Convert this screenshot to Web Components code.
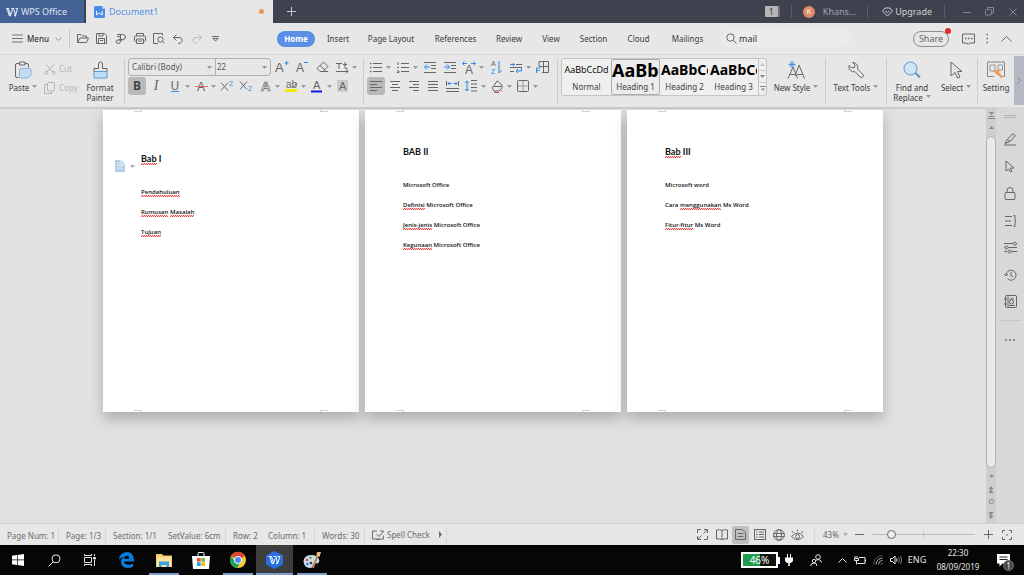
<!DOCTYPE html>
<html lang="en">
<head>
<meta charset="utf-8">
<title>Document1 - WPS Office</title>
<style>
html, body { margin: 0; padding: 0; }
body { font: 8px/12px "Noto Sans", "Open Sans", sans-serif; color: #3a3a3a; background: #e1e1e1; }
</style>
</head>
<body>
<wps-app></wps-app>
<script>
const BLUE = '#2f86e8';
const T = 'font-family="Liberation Sans, sans-serif" stroke="none" fill="currentColor"';
/* name: [width, height, markup] */
const ICONS = {
  arr: [5, 3, '<path d="M0 0h5L2.500 3z" fill="currentColor" stroke="none"/>'],
  arrup: [5, 3, '<path d="M0 3h5L2.500 0z" fill="currentColor" stroke="none"/>'],
  wlogo: [12, 10, '<path stroke-width="1.100" d="M0 1.500h2.500l2 7L6.500 2.500M1 1.500l2.300 7h1.200M5 1.500h2.500l2 7 2-7H9.500M8 8.500h1.500"/>'],
  docw: [11, 12, '<path d="M1.500 0H8l3 3v7.500Q11 12 9.500 12h-8Q0 12 0 10.500v-9Q0 0 1.500 0z" fill="#4c8ae8" stroke="none"/><path d="M8 0v3h3" fill="#a9c8f7" stroke="none"/><path d="M2.500 5v4l2.800-2 2.900 2V5" stroke="#fff"/>'],
  plus: [9, 9, '<path d="M4.500 0v9M0 4.500h9" stroke-width="1"/>'],
  diamond: [11, 10, '<path d="M3 1h5l2.500 3-5 5-5-5zM3.500 4l2 1.500 2-1.500"/>'],
  min: [8, 8, '<path d="M0 4.500h8"/>'],
  restore: [9, 9, '<rect x=".5" y="2.500" width="6" height="5.500" rx="1"/><path d="M2.500 2.500V.5h6v5.500h-2"/>'],
  close: [8, 8, '<path d="M.5.500l7 7M7.500.500l-7 7"/>'],
  burger: [11, 9, '<path d="M0 1h11M0 4.500h11M0 8h11"/>'],
  chev: [7, 4, '<path d="M.5.500l3 3 3-3"/>'],
  open: [12, 11, '<path d="M.5 9.500V1.500H4L5.500 3H9.500V5M.5 9.500 3 5h8.500L9.500 9.500z"/>'],
  save: [11, 11, '<path d="M.5.500h8l2 2v8h-10zM2.500 10.500v-5h6v5M3 .5V3h4V.500M4 7.500h3"/>'],
  pdf: [12, 12, '<path d="M2 1.500h5.500q3 0 3 2.500t-3 2.500H5M2 3.500h3.500M5.500 1.500v6.500q0 2.500-2.200 2.500T1 8.800 3 7h5M5.500 5.500l-2 1.500"/>'],
  print: [12, 11, '<path d="M2.500 3V.500h7V3M2.500 8.500h-1q-1 0-1-1V4q0-1 1-1h9q1 0 1 1v3.500q0 1-1 1h-1M2.500 6h7v4.500h-7zM4 8h4"/>'],
  preview: [12, 11, '<path d="M5 10.500H.500V.500h9v2M11.500 10.500 9.500 8.500"/><circle cx="7.500" cy="6.500" r="2.700"/>'],
  undo: [10, 10, '<path d="M3.500.500l-3 3 3 3M.5 3.500H6q3.200 0 3.200 2.800T5 9.500"/>'],
  redo: [10, 10, '<path d="M6.500.500l3 3-3 3M9.500 3.500H4Q.8 3.500.8 6.300T5 9.500"/>'],
  more: [7, 6, '<path d="M0 .5h7"/><path d="M1 2.500h5L3.500 5z"/>'],
  search: [11, 11, '<circle cx="4.500" cy="4.500" r="3.700"/><path d="M7.500 7.500l3 3"/>'],
  chat: [13, 12, '<path d="M.5 1h12v9h-5l-1.500 1.500L5 10H.500z"/><path d="M3 5.500h1.500M6 5.500h1.500M9 5.500h1.500" stroke-width="1.500"/>'],
  vdots: [3, 11, '<path d="M.5 1.500h1.500M.5 5.500h1.500M.5 9.500h1.500" stroke-width="1.500"/>'],
  caretup: [11, 6, '<path d="M.5 5.500l5-5 5 5"/>'],
  paste: [18, 18, '<path d="M4.500 16.500H3q-1.500 0-1.500-1.500V4Q1.500 2.500 3 2.500h2M11 2.500h2q1.500 0 1.500 1.500v2.500M5.500 1h5.500v3H5.500z"/><path d="M7 7.500h8.500q1.500 0 1.500 1.500v5L14 17H7q-1.500 0-1.500-1.500V9Q5.500 7.500 7 7.500z" fill="#c3dbf3" stroke="#8fb2dc"/>'],
  cut: [12, 11, '<path d="M2 .5l7 7.500M10 .5 3 8"/><circle cx="2.300" cy="8.800" r="1.500"/><circle cx="9.700" cy="8.800" r="1.500"/>'],
  copy: [11, 12, '<rect x="3.500" y=".5" width="7" height="8.500" rx="1"/><path d="M3.500 2.500H.500v9h7V9"/>'],
  painter: [18, 18, '<path d="M3 10.500h13v6.500H3z" fill="#c3ddf6" stroke="#5f9bdb"/><path d="M3 10.500V7.500h4.500V3q0-2 2-2t2 2v4.500H16v3"/>'],
  aplus: [14, 14, `<text x="0" y="12" font-size="13" ${T}>A</text><path d="M11.500 1v4M9.500 3h4" stroke="${BLUE}"/>`],
  aminus: [14, 14, `<text x="1" y="12" font-size="12" ${T}>A</text><path d="M9 2.500h4" stroke="${BLUE}"/>`],
  eraser: [13, 12, '<path d="M1 7.500 7.500 1 12 5.500 7 10.500H4zM4 4.500l5 4.500M6 10.500h6"/>'],
  tt: [13, 12, '<path d="M0 2.500h6M3 2.500V8M7 3.500h4M9 1v5.500q0 1 1 1h1.500M0 10.500h12M10 8.500l2 2-2 2"/>'],
  strike: [13, 13, `<text x="2" y="11" font-size="12" ${T}>A</text><path d="M0 6.500h13" stroke="#e0706c"/>`],
  sup: [14, 12, `<path d="M1 2.500l7 8M8 2.500l-7 8"/><text x="9" y="6" font-size="7" ${T} style="fill:${BLUE}">2</text>`],
  sub: [14, 12, `<path d="M1 1.500l7 8M8 1.500l-7 8"/><text x="9" y="11" font-size="7" ${T} style="fill:${BLUE}">2</text>`],
  aout: [13, 13, '<text x="2" y="11" font-size="13" font-family="Liberation Sans, sans-serif" font-weight="700" stroke="currentColor" stroke-width=".7" fill="#e7e7e7">A</text>'],
  hilite: [13, 13, `<text x="1" y="8" font-size="10" ${T}>ab</text><path d="M0 10.500h12" stroke="#f4ec00" stroke-width="3"/><path d="M12 3 8 7.500"/>`],
  acolor: [12, 13, `<text x="2" y="9" font-size="11" ${T}>A</text><path d="M0 11.500h11" stroke="#1414ee" stroke-width="2"/>`],
  ashade: [12, 12, `<rect width="11" height="12" fill="#cacaca" stroke="none"/><text x="2" y="10" font-size="11" ${T}>A</text>`],
  bullets: [12, 11, '<path d="M3 1.500h9M3 5.500h9M3 9.500h9"/><path d="M0 1.500h1.500M0 5.500h1.500M0 9.500h1.500" stroke-width="1.500"/>'],
  numbers: [12, 11, '<path d="M4 1.500h8M4 5.500h8M4 9.500h8"/><path d="M1 0v3M0 5.500h2M0 9h2v1.500H0"/>'],
  outdent: [12, 11, `<path d="M0 .5h12M7 3.500h5M7 6.500h5M0 10.500h12"/><path d="M6 5H.500M3 2.500.500 5 3 7.500" stroke="${BLUE}"/>`],
  indent: [12, 11, `<path d="M0 .5h12M7 3.500h5M7 6.500h5M0 10.500h12"/><path d="M0 5h5.500M3 2.500 5.500 5 3 7.500" stroke="${BLUE}"/>`],
  adist: [14, 13, `<text x="3" y="13" font-size="12" ${T}>A</text><path d="M5 2.500H1M2.500.500l-2 2 2 2M9 2.500h4M11.500.500l2 2-2 2" stroke="${BLUE}"/>`],
  sort: [12, 14, `<text x="1" y="6" font-size="7" ${T}>A</text><text x="1" y="14" font-size="7" ${T} style="fill:${BLUE}">Z</text><path d="M9 1v12M9 13l2.500-2.500" stroke="${BLUE}"/>`],
  tabs: [12, 11, `<path d="M6 2.500h6M0 5.500h12M0 9.500h4"/><path d="M0 2.500h4M3 1l1.500 1.500L3 4M11.500 6v3H6M8 7 6 9l2 2" stroke="${BLUE}"/>`],
  tbl: [13, 12, `<path d="M3 5V.500h9.500v11H6M3 5.500h9.500M7.500.500v11"/><path d="M.5 12V7h4M.5 9.500h3" stroke="${BLUE}"/>`],
  left: [12, 11, '<path d="M0 .5h12M0 3.500h7M0 6.500h12M0 9.500h7"/>'],
  center: [12, 11, '<path d="M1 .5h10M3 3.500h6M1 6.500h10M3 9.500h6"/>'],
  right: [12, 11, '<path d="M1 .5h10M5 3.500h6M1 6.500h10M5 9.500h6"/>'],
  justify: [12, 11, '<path d="M1 .5h10M1 3.500h10M1 6.500h10M1 9.500h10"/>'],
  distrib: [13, 11, `<path d="M.5 0v5M12.500 0v5M0 7.500h13M0 10.500h13"/><path d="M2 2.500h3.500M3.500 1 2 2.500 3.500 4M11 2.500H7.500M9.500 1 11 2.500 9.500 4" stroke="${BLUE}"/>`],
  spacing: [12, 12, `<path d="M6 .5h6M6 4h6M6 7.500h6M6 11h6"/><path d="M2 1v10M0 3l2-2 2 2M0 9l2 2 2-2" stroke="${BLUE}"/>`],
  fill: [13, 13, '<path d="M2.500 6.500 6 1q1.500 0 2 1.500l3 2.500v3L8 11H3L1 7.500l1.500-1h8"/><path d="M3 12.500h5M9 9l2 2.500" stroke="#d9534f"/>'],
  borders: [12, 12, '<rect x=".5" y=".5" width="11" height="11" rx="1"/><path d="M6 1v10M1 6h10" stroke="#999"/>'],
  newstyle: [20, 18, `<path d="M2 17.500 7 6l4.500 11.500M4 13.500h6M9 15 13 4l5.500 13.500M11 13.500h6"/><path d="M6 0v7M2.500 3.500h7M3.500 1l5 5M8.500 1l-5 5" stroke="#4a90e2"/>`],
  wrench: [18, 18, '<path d="M5.500 1.500 8 4l-.5 2.500-2.500.500L2 4.500q-.8 3 1.300 5t4.500 1L13 16q1.500 1.300 2.800 0t0-2.800L10.500 8Q11.500 5 9.500 3t-4-1.500z"/>'],
  find: [18, 18, '<circle cx="7.500" cy="7.500" r="6.500" fill="#cfe4f6" stroke="#5b97d8"/><path d="M12.500 12 17 16.500" stroke="#5b97d8" stroke-width="2"/>'],
  cursor: [14, 18, '<path d="M2 1v14l4-3.500 2.500 5.500 2.500-1-2.500-5.500H13z"/>'],
  setting: [20, 18, '<path d="M8 15.500H1.500V1h17v14.500H17" stroke="#888"/><path d="M4 4h5v6H4zM12 4h4.500v5H12z" stroke="#999"/><path d="M8.500 9l2.500 3 2-3.500M11.500 11.500l4.500 5" stroke="#ef9a55" stroke-width="2.500"/>'],
  expand: [4, 7, '<path d="M.5.500l3 3-3 3"/>'],
  smallmore: [6, 6, '<path d="M0 .5h6"/><path d="M1 2.500h4L3 5z" fill="currentColor" stroke="none"/>'],
  pageopt: [10, 12, '<path d="M0 0h6l4 4v8H0z" fill="#b5cde6" stroke="none"/><path d="M2 3h3M2 5.500h6M2 8h6M6 0v4h4" stroke="#eef4fa"/>'],
  browse: [7, 7, '<path d="M1 0h5L3.500 3z" fill="currentColor" stroke="none"/><path d="M1 4.500h5M0 6.500h7"/>'],
  pen: [14, 13, '<path d="M2 10.500 4.500 6 10 .700l2.300 2L7 8.500zM4.500 6.500 7 8.500M1 12h12"/>'],
  pointer: [10, 13, '<path d="M1 1v10l2.500-2 2 3 1.500-.700-1.500-3.300H9z"/>'],
  lock: [12, 13, '<path d="M3 5.500V4q0-3.500 3-3.500T9 4v1.500"/><rect x="1" y="5.500" width="10" height="7" rx="1"/>'],
  lines: [13, 12, '<path d="M1 1.500h7M1 6h6M1 10.500h7M9.500.500h1.500v4.500l1 1-1 1v4.500H9.500"/>'],
  sliders: [13, 12, '<path d="M0 1.500h9M4 5.500h9M0 9.500h3M7 9.500h6M0 5.500h1"/><circle cx="11" cy="1.700" r="1.500"/><circle cx="2.500" cy="5.500" r="1.500"/><circle cx="5.500" cy="9.500" r="1.500"/>'],
  history: [13, 12, '<path d="M2 6a5 5 0 1 1 1.500 3.800M0 5l2 2 2-2M7 3v3.500l2 1.500"/>'],
  contact: [13, 13, '<rect x="1.500" y=".5" width="11" height="12" rx="1"/><path d="M4 1v11M0 4h3M0 9h3M5 10.500h6M5.500 4.500q2.500-2.500 4.500 0"/><circle cx="7.500" cy="7" r="2"/>'],
  dots: [11, 2, '<path d="M0 1h2M4 1h2M8 1h2" stroke-width="2"/>'],
  dblup: [6, 7, '<path d="M.5 3.500h5L3 0zM.5 7h5L3 3.500z" fill="currentColor" stroke="none"/>'],
  dbldn: [6, 7, '<path d="M.5 0h5L3 3.500zM.5 3.500h5L3 7z" fill="currentColor" stroke="none"/>'],
  box: [5, 5, '<rect x=".5" y=".5" width="4" height="4" rx="1"/>'],
  spell: [12, 10, '<path d="M5 1H.500v8h11V5.500M8 1h3.500v1M4 9.500h4"/><path d="M4.500 4l2.500 2.500 4-4.500" />'],
  play: [3, 7, '<path d="M0 0l3 3.500L0 7z" fill="#5c6b85" stroke="none"/>'],
  full: [11, 11, '<path d="M.5 4V.500H4M7 .5h3.500V4M10.500 7v3.500H7M4 10.500H.500V7M6.500 4.500l3.500-3.500M4.500 6.500 1 10"/>'],
  book: [12, 11, '<path d="M6 1.500v9M6 1.500Q3.500 0 .5 1v9q3-.5 5.500.500Q8.500 9.500 11.500 10V1Q8.500 0 6 1.500z"/>'],
  doc: [11, 11, '<path d="M.5.500h7l3 3v7h-10zM2.500 4.500h6M2.500 7.500h6"/>'],
  outline: [12, 11, '<rect x=".5" y=".5" width="11" height="10"/><path d="M2 3h1.500M5 3h5M2 5.500h1.500M5 5.500h5M2 8h1.500M5 8h5"/>'],
  globe: [12, 12, '<circle cx="6" cy="6" r="5.400"/><ellipse cx="6" cy="6" rx="2.500" ry="5.400"/><path d="M.5 4.500h11M.5 7.500h11"/>'],
  eye: [13, 12, '<path d="M.5 7.500Q6.500.500 12.500 7.500 6.500 14 .5 7.500zM6.500 2.500V.500M2.500 4 1 2M10.500 4 12 2"/><circle cx="6.500" cy="7.500" r="2"/>'],
  minus: [9, 9, '<path d="M0 4.500h9"/>'],
  fit: [10, 10, '<path d="M.5 3V.500H3M7 .5h2.500V3M9.500 7v2.500H7M3 9.500H.500V7M4 5h2"/>'],
  win: [12, 12, '<path d="M0 1.700 5 1v4.600H0zM5.700.900 12 0v5.600H5.700zM0 6.300h5V11l-5-.700zM5.700 6.300H12V12l-6.300-.900z" fill="#fff" stroke="none"/>'],
  wsearch: [13, 13, '<circle cx="8" cy="4.800" r="4"/><path d="M5 8 .5 12.500"/>'],
  taskview: [13, 12, '<path d="M.5 0v1.500h7V0M.5 12v-1.500h7V12M.5 3.500h7v5h-7zM10.500 0v2M10.500 6v6"/><path d="M9.500 3.500h2v1.500h-2z" fill="currentColor"/>'],
  edge: [15, 16, '<path d="M0 8Q.5.500 8 0q6.500.300 7 7.500v2H5q.5 3.300 4.500 3.300 2.500 0 4.500-1.300v3.200Q11.500 16 8.500 16 2 15.500 2 10q0-3.500 3-5.300Q1.500 5 0 8zM5 6.700h5.300Q10.200 3.700 7.800 3.700 5.500 3.700 5 6.700z" fill="#0a7bd8" stroke="none"/>'],
  files: [16, 15, '<path d="M0 1h6l1 1.500h9V14H0z" fill="#f5cf6b" stroke="none"/><path d="M1 4h14v10H1z" fill="#fbe29a" stroke="none"/><path d="M3 14V8.500h10V14h-2.500v-2h-5v2z" fill="#3aa0e6" stroke="none"/>'],
  store: [18, 17, '<path d="M6 4V1.500Q6 .5 7 .5h4q1 0 1 1V4" stroke="#fff"/><path d="M0 4h18l-1 13H1z" fill="#fff" stroke="none"/><path d="M5 6h3.700v3.700H5z" fill="#e8502b" stroke="none"/><path d="M9.300 6H13v3.700H9.300z" fill="#7cb82f" stroke="none"/><path d="M5 10.300h3.700V14H5z" fill="#1b9fe4" stroke="none"/><path d="M9.300 10.300H13V14H9.300z" fill="#fbb811" stroke="none"/>'],
  chrome: [16, 16, '<circle cx="8" cy="8" r="8" fill="#f5c92f" stroke="none"/><path d="M8 8 1 4a8 8 0 0 1 14 0z" fill="#dc4437" stroke="none"/><path d="M8 8H3.800L1 4a8 8 0 0 0 6 12l3-5z" fill="#1c9f5a" stroke="none"/><circle cx="8" cy="8" r="3.600" fill="#4a8af4" stroke="#fff" stroke-width="1"/>'],
  wpsapp: [17, 18, '<path d="M8.500 0 17 4.500v9L8.500 18 0 13.500v-9z" fill="#2a6fe0" stroke="none"/><path stroke="#fff" d="M2.500 5.500h3l2 7 1.500-5M4 5.500l2 7h1.500M7.500 5.500h2.500l1.500 7 2.500-7H11.500M10 12.500h1.500"/>'],
  paint: [18, 17, '<path d="M7.500 3Q1 3.500.5 9.500 1 15.500 7 16q3 0 2.800-2.500 0-2 2.500-2 4 .5 4-3Q15.500 3 7.500 3z" fill="#c9dcec" stroke="none"/><circle cx="4" cy="8" r="1.300" fill="#d94e3d" stroke="none"/><circle cx="7.500" cy="5.800" r="1.300" fill="#58a946" stroke="none"/><circle cx="4.500" cy="12" r="1.300" fill="#2f7bd0" stroke="none"/><circle cx="8" cy="11" r="1.300" fill="#333" stroke="none"/><path d="M15.500 1 10 16" stroke="#c07a40" stroke-width="2"/><path d="M14 0h4l-1.500 5-3-1z" fill="#e9c08a" stroke="none"/>'],
  plug: [8, 12, '<path d="M2.500 0v4M5.500 0v4" stroke="#fff"/><path d="M0 3.500h8V6Q8 8.500 4.800 9v3H3.200V9Q0 8.500 0 6z" fill="#fff" stroke="none"/>'],
  people: [12, 12, '<circle cx="8" cy="3" r="2.300"/><path d="M5.500 6.500 8 5.500q3 0 3.500 3"/><circle cx="4" cy="7" r="1.700"/><path d="M.5 12q.5-3 3.500-3t3 3"/>'],
  traycaret: [9, 5, '<path d="M.5 4.500l4-4 4 4"/>'],
  batt: [12, 10, '<path d="M5 2.500h6v6H3.500M1 1v2M3 1v2M.5 3.500h4v2h-4zM2.500 6v3.500M11.500 4.500v2"/>'],
  wifi: [10, 10, '<path d="M.5 9.500a9 9 0 0 1 9-9" stroke="#555"/><path d="M3 9.500A6.500 6.500 0 0 1 9.500 3M5.500 9.500a4 4 0 0 1 4-4M8 9.500 9.500 8" stroke="#aaa"/>'],
  sound: [12, 10, '<path d="M.5 3.500h2L5 1v8L2.500 6.500h-2zM6.500 3.500q1 1.500 0 3"/><path d="M8.500 2q2 3 0 6M10.500 1q2.500 4 0 8" stroke="#777"/>'],
  note: [13, 13, '<path d="M0 0h13v9.500H5.500L2.500 12.500V9.500H0z" fill="#fff" stroke="none"/><path d="M2.500 3h8M2.500 5.500h8" stroke="#222"/>']
};

class View extends HTMLElement {
  connectedCallback() {
    if (this.shadowRoot) return;
    this.attachShadow({ mode: 'open' }).innerHTML = `<style>
      * { box-sizing: border-box; }
      button { font: inherit; color: inherit; background: none; border: 0; padding: 0; margin: 0; display: flex; align-items: center; white-space: nowrap; }
      ${this.css()}</style>${this.html()}`;
  }
  css() { return ''; }
  html() { return '<slot></slot>'; }
}
const icon = (n, cls = '') => `<ui-icon name="${n}" class="${cls}"></ui-icon>`;

customElements.define('ui-icon', class extends View {
  css() { return ':host { display: inline-flex; flex: none; } svg { display: block; overflow: visible; }'; }
  html() {
    const [w, h, body] = ICONS[this.getAttribute('name')];
    return `<svg width="${w}" height="${h}" viewBox="0 0 ${w} ${h}" fill="none" stroke="currentColor" aria-hidden="true">${body}</svg>`;
  }
});

/* Small ribbon button: an icon or a slotted letter, with an optional menu arrow. */
customElements.define('tool-button', class extends View {
  css() { return `
    :host { display: flex; color: #666; }
    button { height: 18px; }
    .face { width: 18px; height: 18px; display: flex; align-items: center; justify-content: center; border-radius: 3px; }
    :host([on]) .face { background: #b9b9b9; }
    .arrow { width: 7px; padding-left: 1px; display: flex; color: #999; }`; }
  html() {
    const n = this.getAttribute('icon');
    return `<button aria-label="${this.getAttribute('label')}"><span class="face">${n ? icon(n) : '<slot></slot>'}</span>${this.hasAttribute('menu') ? `<span class="arrow">${icon('arr')}</span>` : ''}</button>`;
  }
});

/* Tall ribbon button: picture above one or two lines of text. */
customElements.define('big-button', class extends View {
  css() { return `
    :host { display: flex; flex: none; justify-content: center; width: var(--w, 40px); padding-top: 6px; box-sizing: border-box; }
    button { flex-direction: column; line-height: 10px; gap: 4px; }
    ui-icon { color: #666; }
    .pic { height: 18px; display: flex; }
    .text { text-align: center; white-space: pre-line; color: #3c3c3c; }
    .text ui-icon { color: #999; margin: 0 0 5px 3px; vertical-align: bottom; }`; }
  html() { return `<button><span class="pic">${icon(this.getAttribute('icon'))}</span><span class="text"><slot></slot>${this.hasAttribute('menu') ? icon('arr') : ''}</span></button>`; }
});

customElements.define('title-bar', class extends View {
  css() { return `
    :host { display: flex; height: 23px; background: #3f424e; color: #a3a5ad; font-size: 9px; align-items: center; }
    button { justify-content: center; height: 23px; }
    .home { width: 84px; margin-right: 2px; gap: 3px; background: #456297; color: #dfe5f0; padding-right: 11px; }
    .doc { width: 187px; background: #e7e7e7; color: #5590ea; justify-content: flex-start; padding: 0 9px 0 8px; gap: 4px; }
    .dot { width: 5px; height: 5px; border-radius: 50%; background: #ef9550; margin-left: auto; }
    .add { width: 36px; color: #c9cad0; }
    .right { margin-left: auto; display: flex; align-items: center; }
    .count { width: 13px; height: 11px; background: #b5b5b8; color: #3f424e; line-height: 11px; text-align: center; border-radius: 1px; margin-right: 13px; box-shadow: 2px 0 0 #6d6f78; }
    .sep { width: 1px; height: 13px; background: #5a5d68; }
    .user { gap: 8px; padding: 0 11px; }
    .face { width: 12px; height: 12px; border-radius: 50%; background: #e08a66; color: #fff; line-height: 12px; font-size: 7px; text-align: center; }
    .up { gap: 2px; padding: 0 12px 0 14px; color: #d0d1d6; }
    .controls { display: flex; margin-left: 10px; }
    .win { width: 23px; color: #85878f; }`; }
  html() { return `
    <button class="home">${icon('wlogo')}WPS Office</button>
    <button class="doc">${icon('docw')}Document1<span class="dot"></span></button>
    <button class="add" aria-label="New tab">${icon('plus')}</button>
    <div class="right"><span class="count">1</span><span class="sep"></span>
      <button class="user"><span class="face">K</span>Khans...</button><span class="sep"></span>
      <button class="up">${icon('diamond')}Upgrade</button><span class="sep"></span>
      <div class="controls"><button class="win" aria-label="Minimize">${icon('min')}</button><button class="win" aria-label="Restore">${icon('restore')}</button><button class="win" aria-label="Close">${icon('close')}</button></div></div>`; }
});

customElements.define('menu-bar', class extends View {
  css() { return `
    :host { display: flex; height: 31px; background: #e7e7e7; align-items: center; padding-left: 12px; color: #3c3c3c; }
    button { justify-content: center; flex: none; height: 16px; }
    .menu { gap: 4px; font-weight: 500; width: 57px; justify-content: flex-start; color: #333; }
    .menu ui-icon { color: #777; } .menu .c { margin-left: 2px; color: #999; }
    .sep { width: 1px; height: 18px; background: #c6c6c6; margin-right: 3px; flex: none; }
    .q { width: 19px; color: #666; } .q.off { color: #bbb; }
    nav { display: flex; margin-left: 52px; flex: none; }
    .on { background: #5a8fe6; color: #fff; border-radius: 8px; font-weight: 700; width: 38px; margin-right: 2px; }
    .find { display: flex; align-items: center; gap: 2px; margin-left: 9px; padding-left: 4px; width: 128px; height: 17px; border-radius: 8px; background: #ebebeb; color: #666; }
    input { border: 0; background: none; font: inherit; font-size: 9px; color: #333; width: 90px; padding: 0; outline: 0; height: 16px; }
    .right { margin-left: auto; display: flex; align-items: center; color: #666; flex: none; }
    .share { width: 36px; font-size: 9px; border: 1px solid #8e8e8e; border-radius: 8px; position: relative; margin-right: 10px; color: #666; }
    .share::after { content: ""; position: absolute; width: 6px; height: 6px; border-radius: 50%; background: #e32b2b; top: -4px; right: -3px; }
    .r { width: 19px; } .last { margin-right: 8px; }`; }
  html() {
    const quick = [['open', 'Open'], ['save', 'Save'], ['pdf', 'Export'], ['print', 'Print'], ['preview', 'Preview'], ['undo', 'Undo'], ['redo', 'Redo'], ['more', 'More']];
    const tabs = [['Insert', 42], ['Page Layout', 64], ['References', 65], ['Review', 42], ['View', 42], ['Section', 43], ['Cloud', 47], ['Mailings', 51]];
    return `<button class="menu">${icon('burger')}Menu${icon('chev', 'c')}</button><span class="sep"></span>
    ${quick.map(([i, l]) => `<button class="q ${i === 'redo' ? 'off' : ''}" aria-label="${l}">${icon(i)}</button>`).join('')}
    <nav><button class="on">Home</button>${tabs.map(([t, w]) => `<button style="width:${w}px">${t}</button>`).join('')}</nav>
    <label class="find">${icon('search')}<input aria-label="Search" value="mail"></label>
    <div class="right"><button class="share">Share</button><button class="r" aria-label="Feedback">${icon('chat')}</button><button class="r" aria-label="Options">${icon('vdots')}</button><button class="r last" aria-label="Collapse">${icon('caretup')}</button></div>`;
  }
});

customElements.define('style-gallery', class extends View {
  css() { return `
    :host { display: flex; flex: none; height: 38px; margin-top: 3px; border: 1px solid #c4c4c4; border-radius: 3px; background: #efefef; box-sizing: border-box; }
    button { width: 49px; flex-direction: column; justify-content: flex-end; }
    .style { padding-bottom: 2px; }
    .on { outline: 1px solid #adadad; outline-offset: -1px; border-radius: 2px; background: #ececec; }
    .s { width: 47px; height: 22px; line-height: 22px; overflow: hidden; text-align: left; color: #000; font-weight: 700; }
    .n { line-height: 12px; height: 12px; color: #3c3c3c; }
    .scroll { width: 8px; border-left: 1px solid #c4c4c4; display: grid; grid-template-rows: 1fr 1fr 1fr; color: #888; }
    .scroll button { width: 7px; justify-content: center; border-bottom: 1px solid #cfcfcf; }
    .scroll button:first-child { color: #c4c4c4; }
    .scroll button:last-child { border: 0; }`; }
  html() {
    const s = [['AaBbCcDd', 'Normal', 'font-size:9px;font-weight:400;font-family:Open Sans,sans-serif;text-align:center'], ['AaBb', 'Heading 1', 'font-size:18px'], ['AaBbCc', 'Heading 2', 'font-size:14px'], ['AaBbCc', 'Heading 3', 'font-size:14px']];
    return s.map(([t, n, st], i) => `<button class="style ${i === 1 ? 'on' : ''}"><span class="s" style="${st}">${t}</span><span class="n">${n}</span></button>`).join('') +
      `<div class="scroll"><button aria-label="Up">${icon('arrup')}</button><button aria-label="Down">${icon('arr')}</button><button aria-label="All styles">${icon('smallmore')}</button></div>`;
  }
});

customElements.define('ribbon-bar', class extends View {
  css() { return `
    :host { display: flex; height: 53px; background: #e7e7e7; border-top: 1px solid #d6d6d6; overflow: hidden; }
    .sep { width: 1px; margin: 3px 0; background: #cdcdcd; flex: none; }
    .font { margin-left: 2px; } .para { margin: 3px 3px 3px 2px; }
    .clip { display: flex; padding-left: 3px; width: 124px; flex: none; }
    .cc { display: flex; flex-direction: column; width: 39px; padding-top: 5px; gap: 1px; color: #b5b5b5; margin-left: 1px; }
    .cc button { gap: 3px; height: 18px; } .cc ui-icon { width: 12px; }
    .grp { padding: 3px 3px 0; flex: none; display: flex; flex-direction: column; gap: 1px; }
    .pg { width: 191px; } .pg .r1 { justify-content: space-between; gap: 0; }
    .row { display: flex; gap: 1px; height: 18px; }
    .r1 { gap: 2px; }
    .combo { display: flex; width: 143px; height: 18px; border: 1px solid #b0b0b0; border-radius: 3px; flex: none; }
    .combo label { position: relative; display: flex; flex: 1; border-left: 1px solid #b0b0b0; }
    .combo label:first-child { flex: 0 0 86px; border: 0; }
    .combo ui-icon { position: absolute; right: 3px; top: 7px; color: #999; }
    select { appearance: none; width: 100%; border: 0; background: none; padding: 0 0 0 3px; font: inherit; color: #555; }
    label + label select { padding-left: 1px; }
    tool-button { font-size: 12px; }
    .b { font-weight: 700; color: #444; } .i { font-style: italic; font-family: "Liberation Serif", serif; font-size: 14px; }
    .u { border-bottom: 1px solid ${BLUE}; line-height: 11px; }
    .select { margin-right: 2px; }
    .more { margin: 1px 0 2px auto; width: 10px; background: #b4b8c3; color: #888; justify-content: center; flex: none; }`; }
  html() {
    const t = (i, l, m = '', x = '') => `<tool-button icon="${i}" label="${l}" ${m} ${x}></tool-button>`;
    return `
    <div class="clip"><big-button icon="paste" menu>Paste</big-button>
      <div class="cc"><button>${icon('cut')}Cut</button><button>${icon('copy')}Copy</button></div>
      <big-button icon="painter" style="--w:34px">Format<br>Painter</big-button></div><span class="sep"></span>
    <div class="grp"><div class="row r1"><div class="combo"><label><select aria-label="Font"><option>Calibri (Body)</option></select>${icon('arr')}</label><label><select aria-label="Font size"><option>22</option></select>${icon('arr')}</label></div>
        ${t('aplus', 'Grow font')}${t('aminus', 'Shrink font')}${t('eraser', 'Clear format')}${t('tt', 'Text direction', 'menu')}</div>
      <div class="row"><tool-button label="Bold" on><span class="b">B</span></tool-button><tool-button label="Italic"><span class="i">I</span></tool-button><tool-button label="Underline" menu><span class="u">U</span></tool-button>
        ${t('strike', 'Strikethrough', 'menu')}${t('sup', 'Superscript')}${t('sub', 'Subscript')}${t('aout', 'Text effects', 'menu')}${t('hilite', 'Highlight', 'menu')}${t('acolor', 'Font color', 'menu')}${t('ashade', 'Shading')}</div></div>
    <span class="sep font"></span>
    <div class="grp pg"><div class="row r1">${t('bullets', 'Bullets', 'menu')}${t('numbers', 'Numbering', 'menu')}${t('outdent', 'Decrease indent')}${t('indent', 'Increase indent')}${t('adist', 'Asian layout', 'menu')}${t('sort', 'Sort')}${t('tabs', 'Marks', 'menu')}${t('tbl', 'Tabs')}</div>
      <div class="row">${t('left', 'Align left', '', 'on')}${t('center', 'Center')}${t('right', 'Align right')}${t('justify', 'Justify')}${t('distrib', 'Distribute')}${t('spacing', 'Line spacing', 'menu')}${t('fill', 'Fill', 'menu')}${t('borders', 'Borders', 'menu')}</div></div>
    <span class="sep para"></span>
    <style-gallery></style-gallery>
    <big-button icon="newstyle" menu style="--w:58px">New Style</big-button><span class="sep"></span>
    <big-button icon="wrench" menu style="--w:60px">Text Tools</big-button><span class="sep"></span>
    <big-button icon="find" menu style="--w:50px">Find and<br>Replace</big-button>
    <big-button icon="cursor" menu class="select" style="--w:38px">Select</big-button><span class="sep"></span>
    <big-button icon="setting" style="--w:36px">Setting</big-button>
    <button class="more" aria-label="Scroll ribbon">${icon('expand')}</button>`;
  }
});

customElements.define('doc-page', class extends View {
  css() { return `
    :host { display: block; position: relative; flex: none; width: 256px; height: 302px; background: #fff; padding: 36px 38px 0; box-sizing: border-box; box-shadow: 0 7px 13px rgba(0,0,0,.23); font-family: "Open Sans", "Noto Sans", sans-serif; color: #111; }
    :host([tall]) { padding-top: 43px; }
    .m { position: absolute; width: 8px; height: 2px; border: 0 solid #d0d0d0; }
    .tl { left: 31px; top: 0; border-width: 0 1px 1px 0; } .tr { right: 31px; top: 0; border-width: 0 0 1px 1px; }
    .bl { left: 31px; bottom: 0; border-width: 1px 1px 0 0; } .br { right: 31px; bottom: 0; border-width: 1px 0 0 1px; }`; }
  html() { return '<slot></slot><i class="m tl"></i><i class="m tr"></i><i class="m bl"></i><i class="m br"></i>'; }
});

customElements.define('doc-canvas', class extends View {
  css() { return `
    :host { display: flex; flex: 1; min-width: 0; justify-content: center; align-items: flex-start; gap: 6px; padding-top: 3px; background: #e1e1e1; box-shadow: inset 0 2px 0 #cbcbcb; overflow: hidden; }
    h1 { font-size: 9px; line-height: 12px; margin: 0 0 17px; font-family: Lato, sans-serif; }
    p { font-size: 6px; line-height: 20px; font-weight: 600; margin: 0; }
    u { text-decoration: none; padding-bottom: 1px; background: repeating-linear-gradient(90deg, #f24a4a 0 1px, #fbd5d5 1px 2px) 0 100% / 100% 1px no-repeat, repeating-linear-gradient(90deg, #fbd5d5 0 1px, #f24a4a 1px 2px) 0 calc(100% - 1px) / 100% 1px no-repeat; }
    .opt { position: absolute; left: 12px; top: 50px; display: flex; gap: 5px; align-items: center; color: #aaa; }`; }
  html() { return `
    <doc-page tall><h1><u>Bab</u> I</h1><p><u>Pendahuluan</u></p><p><u>Rumusan</u> <u>Masalah</u></p><p><u>Tujuan</u></p><button class="opt" aria-label="Page options">${icon('pageopt')}${icon('arr')}</button></doc-page>
    <doc-page><h1>BAB II</h1><p>Microsoft Office</p><p><u>Definisi</u> Microsoft Office</p><p><u>Jenis-jenis</u> Microsoft Office</p><p><u>Kegunaan</u> Microsoft Office</p></doc-page>
    <doc-page><h1><u>Bab</u> III</h1><p>Microsoft word</p><p>Cara <u>menggunakan</u> Ms Word</p><p><u>Fitur-fitur</u> Ms Word</p></doc-page>`; }
});

customElements.define('scroll-strip', class extends View {
  css() { return `
    :host { display: flex; flex-direction: column; align-items: center; width: 10px; background: #cecece; color: #888; padding: 4px 0 3px; box-sizing: border-box; }
    .thumb { flex: 1; width: 10px; border: 1px solid #b0b0b0; border-radius: 5px; background: #e9e9e9; }
    .s { height: 8px; } .m { height: 10px; } .a { height: 17px; }`; }
  html() { return `<button class="s" aria-label="Ruler">${icon('browse')}</button><button class="a" aria-label="Line up">${icon('arrup')}</button><div class="thumb"></div>
    <button class="a" aria-label="Line down">${icon('arr')}</button><button class="s" aria-label="Previous page">${icon('dblup')}</button><button class="a" aria-label="Browse object">${icon('box')}</button><button class="m" aria-label="Next page">${icon('dbldn')}</button>`; }
});

customElements.define('side-panel', class extends View {
  css() { return `
    :host { display: flex; flex-direction: column; align-items: center; width: 28px; background: #d8d8d8; color: #666; }
    .grip { width: 12px; height: 3px; border: solid #b5b5b5; border-width: 1px 0; margin: 8px 0 8px; }
    button { height: 27px; }
    hr { width: 22px; border: 0; border-top: 1px solid #c6c6c6; margin: 5px 0; }
    .more { color: #8a8a8a; }`; }
  html() { return `<span class="grip"></span>` +
    [['pen', 'Edit'], ['pointer', 'Select'], ['lock', 'Protect'], ['lines', 'Styles'], ['sliders', 'Properties'], ['history', 'History'], ['contact', 'Contacts']].map(([i, l]) => `<button aria-label="${l}">${icon(i)}</button>`).join('') +
    `<hr><button class="more" aria-label="More">${icon('dots')}</button>`; }
});

customElements.define('status-bar', class extends View {
  css() { return `
    :host { display: flex; height: 22px; background: #e7e7e7; border-top: 1px solid #d0d0d0; align-items: center; color: #6c6c6c; box-sizing: border-box; }
    span.t { padding-left: 7px; height: 18px; line-height: 19px; flex: none; white-space: nowrap; }
    .s { border-right: 1px solid #d6d6d6; }
    .spell { width: 82px; padding-left: 7px; gap: 3px; height: 18px; } .spell .p { margin-left: 6px; }
    .right { margin-left: auto; display: flex; align-items: center; color: #666; }
    .v { width: 17px; height: 18px; justify-content: center; margin-right: 2px; border-radius: 2px; }
    .on { background: #bfbfbf; }
    .z { width: 38px; padding-left: 8px; gap: 4px; border-left: 1px solid #d6d6d6; margin-left: 6px; height: 18px; } .z ui-icon { color: #aaa; }
    .k { width: 14px; justify-content: center; } .fit { margin: 0 10px 0 5px; }
    .range { position: relative; width: 103px; margin: 0 6px; display: flex; }
    input { appearance: none; width: 100%; height: 12px; margin: 0; background: linear-gradient(#bdbdbd, #bdbdbd) 0 50% / 100% 1px no-repeat, linear-gradient(#bdbdbd, #bdbdbd) 51px 50% / 1px 5px no-repeat; }
    input::-webkit-slider-thumb { appearance: none; width: 9px; height: 9px; border-radius: 50%; border: 1px solid #666; background: #efefef; }`; }
  html() {
    const cells = [['Page Num: 1', 59, 1], ['Page: 1/3', 47, 1], ['Section: 1/1', 55, 0], ['SetValue: 6cm', 65, 1], ['Row: 2', 35, 0], ['Column: 1', 54, 1], ['Words: 30', 50, 1]];
    const views = ['full', 'book', 'doc', 'outline', 'globe', 'eye'];
    return cells.map(([t, w, s]) => `<span class="t ${s ? 's' : ''}" style="width:${w}px">${t}</span>`).join('') +
    `<button class="spell s">${icon('spell')}Spell Check${icon('play', 'p')}</button>
    <div class="right">${views.map(v => `<button class="v ${v === 'doc' ? 'on' : ''}" aria-label="${v} view">${icon(v)}</button>`).join('')}
      <button class="z">43%${icon('arr')}</button><button class="k" aria-label="Zoom out">${icon('minus')}</button>
      <label class="range"><input type="range" aria-label="Zoom" min="0" max="100" value="16"></label>
      <button class="k" aria-label="Zoom in">${icon('plus')}</button><button class="k fit" aria-label="Fit">${icon('fit')}</button></div>`;
  }
});

customElements.define('task-bar', class extends View {
  css() { return `
    :host { display: flex; height: 30px; background: #060606; color: #e8e8e8; align-items: stretch; }
    button { justify-content: center; width: 36px; flex: none; }
    .app { width: 37px; }
    .run { background: linear-gradient(#7f9fca, #7f9fca) 50% 100% / 30px 2px no-repeat; }
    .act { background: linear-gradient(#7f9fca, #7f9fca) 50% 100% / 100% 2px no-repeat, #3d3d3d; }
    .tray { margin-left: auto; display: flex; align-items: center; }
    .tray button { width: 18px; height: 30px; }
    .bat { width: 37px; height: 16px; border: 2px solid #fff; background: linear-gradient(90deg, #1f9a4f 50%, #111 50%); font-size: 10px; line-height: 12px; text-align: center; color: #fff; }
    .nub { width: 2px; height: 7px; background: #fff; }
    .tray .people { margin: 0 8px 0 9px; }
    .tray .lang { width: 24px; font-size: 9px; }
    .tray .clock { width: 58px; display: block; line-height: 14px; text-align: center; height: 28px; }
    .tray .note { position: relative; width: 32px; margin-right: 5px; }
    .n { position: absolute; left: 16px; top: 15px; width: 11px; height: 11px; border-radius: 50%; background: #4a4a4a; border: 1px solid #777; line-height: 9px; }`; }
  html() { return `
    <button aria-label="Start">${icon('win')}</button><button aria-label="Search">${icon('wsearch')}</button><button aria-label="Task view">${icon('taskview')}</button>
    <button class="app" aria-label="Edge">${icon('edge')}</button><button class="app run" aria-label="Files">${icon('files')}</button><button class="app" aria-label="Store">${icon('store')}</button><button class="app run" aria-label="Chrome">${icon('chrome')}</button><button class="app act" aria-label="WPS">${icon('wpsapp')}</button><button class="app run" aria-label="Paint">${icon('paint')}</button>
    <div class="tray"><span class="bat">46%</span><span class="nub"></span><button aria-label="Power">${icon('plug')}</button><button class="people" aria-label="People">${icon('people')}</button>
      <button aria-label="Hidden icons">${icon('traycaret')}</button><button aria-label="Battery">${icon('batt')}</button><button aria-label="Network">${icon('wifi')}</button><button aria-label="Volume">${icon('sound')}</button>
      <button class="lang">ENG</button><button class="clock">22:30<br>08/09/2019</button><button class="note" aria-label="Notifications">${icon('note')}<span class="n">1</span></button></div>`; }
});

customElements.define('wps-app', class extends View {
  css() { return `
    :host { display: flex; flex-direction: column; min-height: 100vh; overflow: hidden; }
    title-bar, menu-bar, ribbon-bar, status-bar, task-bar { flex: none; }
    main { flex: 1; display: flex; min-width: 0; }`; }
  html() { return `<title-bar></title-bar><menu-bar></menu-bar><ribbon-bar></ribbon-bar>
    <main><doc-canvas></doc-canvas><scroll-strip></scroll-strip><side-panel></side-panel></main>
    <status-bar></status-bar><task-bar></task-bar>`; }
});
</script>
</body>
</html>
